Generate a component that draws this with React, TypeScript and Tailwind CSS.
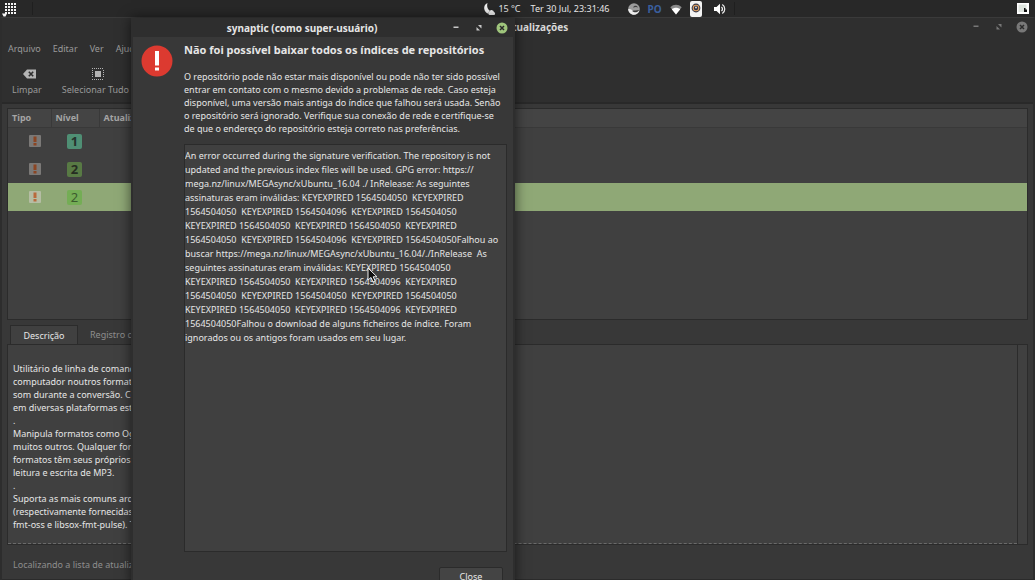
import { ReactNode } from 'react';

interface Update {
    level: number;
    selected?: boolean;
}

const updates: Update[] = [{ level: 1 }, { level: 2 }, { level: 2, selected: true }];

const menuItems = ['Arquivo', 'Editar', 'Ver', 'Ajuda'];

const description = [
    'Utilitário de linha de comando',
    'computador noutros formatos',
    'som durante a conversão. Com',
    'em diversas plataformas esta',
    '.',
    'Manipula formatos como Ogg',
    'muitos outros. Qualquer form',
    'formatos têm seus próprios',
    'leitura e escrita de MP3.',
    '.',
    'Suporta as mais comuns arqu',
    '(respectivamente fornecidas',
    'fmt-oss e libsox-fmt-pulse). T',
];

const message = [
    'O repositório pode não estar mais disponível ou pode não ter sido possível',
    'entrar em contato com o mesmo devido a problemas de rede. Caso esteja',
    'disponível, uma versão mais antiga do índice que falhou será usada. Senão',
    'o repositório será ignorado. Verifique sua conexão de rede e certifique-se',
    'de que o endereço do repositório esteja correto nas preferências.',
];

const errorLog = [
    'An error occurred during the signature verification. The repository is not',
    'updated and the previous index files will be used. GPG error: https://',
    'mega.nz/linux/MEGAsync/xUbuntu_16.04 ./ InRelease: As seguintes',
    'assinaturas eram inválidas: KEYEXPIRED 1564504050  KEYEXPIRED',
    '1564504050  KEYEXPIRED 1564504096  KEYEXPIRED 1564504050',
    'KEYEXPIRED 1564504050  KEYEXPIRED 1564504050  KEYEXPIRED',
    '1564504050  KEYEXPIRED 1564504096  KEYEXPIRED 1564504050Falhou ao',
    'buscar https://mega.nz/linux/MEGAsync/xUbuntu_16.04/./InRelease  As',
    'seguintes assinaturas eram inválidas: KEYEXPIRED 1564504050',
    'KEYEXPIRED 1564504050  KEYEXPIRED 1564504096  KEYEXPIRED',
    '1564504050  KEYEXPIRED 1564504050  KEYEXPIRED 1564504050',
    'KEYEXPIRED 1564504050  KEYEXPIRED 1564504096  KEYEXPIRED',
    '1564504050Falhou o download de alguns ficheiros de índice. Foram',
    'ignorados ou os antigos foram usados em seu lugar.',
].join('\n');

function WindowButtons({ active }: { active?: boolean }) {
    return (
        <div className={`flex items-center gap-[11px] ${active ? 'text-[#c8c8c8]' : 'text-[#787878]'}`}>
            <button aria-label="Minimizar">
                <svg className="size-3" viewBox="0 0 12 12">
                    <path d="M3.500 4.500h5V6h-5z" fill="currentColor" />
                </svg>
            </button>
            <button aria-label="Maximizar">
                <svg className="size-3" viewBox="0 0 12 12" fill="currentColor">
                    <path d="M5 3h3.500v3.500L7.400 5.400 6.200 4.200z" />
                    <path d="M7 8.500H3.500V5l1.200 1.200 1.100 1.100z" />
                </svg>
            </button>
            <button aria-label="Fechar">
                <svg className="size-3" viewBox="0 0 12 12">
                    <circle cx="6" cy="6" r="5.500" fill={active ? '#9fc57c' : '#787878'} />
                    <path d="M4 4l4 4M8 4l-4 4" stroke="#2b2b2b" strokeWidth="1.500" />
                </svg>
            </button>
        </div>
    );
}

function ToolButton({ icon, label }: { icon: ReactNode; label: string }) {
    return (
        <button className="flex flex-col items-center gap-[3px]">
            {icon}
            <span className="leading-[13px]">{label}</span>
        </button>
    );
}

function Panel() {
    return (
        <header className="flex h-[17px] shrink-0 items-center bg-[#282828] text-[#e6e6e6]">
            <div className="flex w-[46.8%] shrink-0 items-center">
                <svg className="ml-px h-4 w-[15px]" viewBox="0 0 15 16" fill="#f4f4f4">
                    {[2, 5, 8, 11].map((y) =>
                        [4, 7, 10, 13].map((x) => (
                            <rect key={`${x}-${y}`} x={x} y={y} width="2" height="2" />
                        ))
                    )}
                    <path d="M1 12.500h5L4.500 15.500h-2z" />
                </svg>
                <div className="ml-4 h-[13px] w-px bg-[#1f1f1f]" />
            </div>
            <svg className="size-3" viewBox="0 0 12 12" fill="#f0f0f0">
                <path d="M3.500 0C1 1.200 0 3.300.2 5.500.4 8 2 9.900 4.300 10.800c0-1.500.7-2.500 2-2.900C4 6.800 2.400 4 3.500 0z" />
                <path d="M5.500 12a2 2 0 0 1 .2-3.800 2.300 2.300 0 0 1 4.200.8 1.600 1.600 0 0 1 .3 3z" />
            </svg>
            <span className="ml-[2px]">15 °C</span>
            <span className="ml-[10px]">Ter 30 Jul, 23:31:46</span>
            <div className="ml-[18px] flex items-center gap-2">
                <svg className="size-3" viewBox="0 0 12 12">
                    <circle cx="6" cy="6" r="5.800" fill="#9c9c9c" />
                    <path d="M.2 6C2 5.600 3.800 6.400 5 8c1.800 1 4 .8 6.400-.2-.7 2.300-3 4-5.400 4C2.800 11.800.2 9.200.2 6z" fill="#ededed" />
                    <path d="M4.200 8c1.800-.8 4.500-.3 6.800-1-.8 1.800-2.800 2.500-4.500 2.200C5.500 9 4.800 8.500 4.200 8z" fill="#3c3c3c" />
                    <path d="M5 4.500c1-2.500 4-2.500 5 0-1.200-.8-3-.6-5 0z" fill="#3e3e3e" />
                </svg>
                <span className="text-[10px] font-bold text-[#3a5f9e]">PO</span>
                <svg className="size-3" viewBox="0 0 12 12">
                    <path d="M6 11.500L.3 4.300C3.500 1 8.500 1 11.700 4.300z" fill="#8a8a8a" />
                    <path d="M6 11.500L1.800 6.200c2.300-2 6.100-2 8.400 0z" fill="#fff" />
                </svg>
                <svg className="h-4 w-3" viewBox="0 0 12 16">
                    <rect x="0" y="0" width="12" height="16" rx="2" fill="#f3f3f3" />
                    <circle cx="6" cy="7" r="4.400" fill="#3a3a48" />
                    <circle cx="6" cy="7" r="3.300" fill="#e0a060" />
                    <circle cx="6" cy="7" r="2.200" fill="#2b3045" />
                    <circle cx="6" cy="6.500" r=".9" fill="#e8e8e8" />
                </svg>
                <svg className="ml-1 size-3" viewBox="0 0 12 12">
                    <path d="M0 4h2.500L6 .8v10.400L2.500 8H0z" fill="#fff" />
                    <path d="M7.500 3.800c1.200 1.300 1.200 3.100 0 4.400M8.300 1.500c3.300 2 3.300 7 0 9" fill="none" stroke="#eee" strokeWidth="1.200" />
                </svg>
                <div className="h-[13px] w-px bg-[#1f1f1f]" />
            </div>
            <svg className="mr-[6px] ml-auto h-[11px] w-3" viewBox="0 0 12 11">
                <rect width="12" height="11" fill="#fff" />
                <rect x="1.500" y="1.500" width="8" height="7.500" fill="#dfe5df" />
                <path d="M7 5h1.500v1.500H10V9H7z" fill="#111" />
            </svg>
        </header>
    );
}

function UpdateManager() {
    return (
        <main className="flex min-h-0 flex-1 flex-col border-x-2 border-t border-x-[#2d2d2d] border-t-[#3a3a3a] bg-[#383838]">
            <div className="border-b-2 border-[#292929] bg-[#2f2f2f] text-[#9a9a9a]">
                <div className="relative flex h-[18px] items-center justify-end pr-[5px]">
                    <h1 className="absolute inset-x-0 pr-10 text-center text-[10px] font-bold text-[#d8d8d8]">
                        Gerenciador de Atualizações
                    </h1>
                    <WindowButtons />
                </div>
                <nav className="mt-1 flex gap-3 px-[6px] py-px">
                    {menuItems.map((item) => (
                        <button key={item} className="leading-[16px]">
                            {item}
                        </button>
                    ))}
                </nav>
                <div className="mt-[10px] flex gap-5 px-[10px] pb-[6px]">
                    <ToolButton
                        label="Limpar"
                        icon={
                            <svg className="ml-[6px] h-3 w-[13px]" viewBox="0 0 13 12">
                                <path d="M0 6l4-4.500h9v9H4z" fill="#b4b4b4" />
                                <path d="M5.800 3.800l4.400 4.400M10.200 3.800L5.800 8.200" stroke="#2f2f2f" strokeWidth="1.600" />
                            </svg>
                        }
                    />
                    <ToolButton
                        label="Selecionar Tudo"
                        icon={
                            <svg className="ml-[6px] size-3" viewBox="0 0 12 12" stroke="#b4b4b4">
                                <path d="M0 .5h12M0 11.500h12M.5 2v8M11.500 2v8" strokeDasharray="1 1" />
                                <rect x="3" y="3" width="6" height="6" fill="#b4b4b4" stroke="none" />
                            </svg>
                        }
                    />
                </div>
            </div>

            {/* Update list */}
            <div className="mx-[5px] mt-1 min-h-0 flex-1 border border-[#2b2b2b] bg-[#404040]">
                <table className="w-full table-fixed border-collapse">
                    <thead className="bg-[#444] text-left text-[#a5a5a5]">
                        <tr className="h-[18px] border-b border-[#393939]">
                            <th className="w-[43px] border-r border-[#393939] p-0 pl-1 leading-[14px]">Tipo</th>
                            <th className="w-12 border-r border-[#393939] p-0 pl-1 leading-[14px]">Nível</th>
                            <th className="p-0 pl-1 leading-[14px]">Atualizar</th>
                        </tr>
                    </thead>
                    <tbody>
                        {updates.map((update, i) => (
                            <tr key={i} className={`h-7 ${update.selected ? 'bg-[#8fa876]' : ''}`}>
                                <td className="pl-[21px]">
                                    <svg className="size-3" viewBox="0 0 12 12">
                                        <rect width="12" height="12" rx="1" fill={update.selected ? '#b5bda4' : '#7b7977'} />
                                        <path
                                            d="M4.500 1.500h3v5.500h-3zM4.500 8h3v2.500h-3z"
                                            fill={update.selected ? '#b96a3c' : '#8c4522'}
                                        />
                                    </svg>
                                </td>
                                <td className="pl-4">
                                    <span
                                        className={`flex size-[15px] items-center justify-center rounded-xs text-[13px] leading-[15px] ${
                                            update.level === 1
                                                ? 'bg-[#4f8f74] font-bold text-[#26332d]'
                                                : update.selected
                                                ? 'bg-[#74ad55] text-[#3c5b2e]'
                                                : 'bg-[#587a44] font-bold text-[#262d22]'
                                        }`}
                                    >
                                        {update.level}
                                    </span>
                                </td>
                                <td />
                            </tr>
                        ))}
                    </tbody>
                </table>
            </div>

            {/* Details */}
            <div className="mx-[5px] mt-[5px] flex" role="tablist">
                <button
                    role="tab"
                    aria-selected="true"
                    className="-mb-px ml-[3px] h-5 w-[68px] border border-b-0 border-[#2b2b2b] bg-[#404040] text-[#e6e6e6]"
                >
                    Descrição
                </button>
                <button role="tab" aria-selected="false" className="ml-3 text-[#8e8e8e]">
                    Registro de alterações
                </button>
            </div>
            <section className="mx-[5px] flex border border-[#2b2b2b] bg-[#404040]">
                <div className="flex-1 border-b border-dashed border-[#6a6a6a] px-[5px] pt-[17px] pb-3 leading-[13px] text-[#e6e6e6]">
                    {description.map((line, i) => (
                        <p key={i}>{line}</p>
                    ))}
                </div>
                <div className="w-[10px] border-l border-[#2b2b2b]" />
            </section>
            <footer className="border-b border-[#2b2b2b] px-[11px] pt-[13px] pb-[7px] leading-[14px] text-[#8e8e8e]">
                Localizando a lista de atualizações
            </footer>
        </main>
    );
}

function ErrorDialog() {
    return (
        <div
            role="dialog"
            aria-labelledby="dialog-title"
            className="absolute top-[18px] left-[131px] w-96 border-x-2 border-[#2e2e2e] bg-[#383838] text-[#e6e6e6] shadow-[0_0_12px_rgba(0,0,0,0.6)]"
        >
            <div className="relative flex h-[19px] items-center justify-end bg-[#2e2e2e] pr-[5px]">
                <h2 id="dialog-title" className="absolute inset-x-0 pr-[42px] text-center text-[10px] font-bold">
                    synaptic (como super-usuário)
                </h2>
                <WindowButtons active />
            </div>
            <div className="flex pr-[6px] pl-2">
                <svg className="mt-2 size-8 shrink-0" viewBox="0 0 32 32">
                    <circle cx="16" cy="16" r="15.500" fill="#dc3a30" />
                    <path d="M14 6h4v14.500h-4zM14 22.500h4v3h-4z" fill="#fff" />
                </svg>
                <div className="ml-[11px] min-w-0 flex-1">
                    <h3 className="mt-[6px] text-[11px] leading-[14px] font-bold whitespace-nowrap">
                        Não foi possível baixar todos os índices de repositórios
                    </h3>
                    <p className="mt-[13px] leading-[13px] whitespace-pre">{message.join('\n')}</p>
                    <textarea
                        readOnly
                        aria-label="Detalhes do erro"
                        value={errorLog}
                        className="mt-[9px] block h-[408px] w-full resize-none overflow-hidden border border-[#2b2b2b] bg-[#404040] pt-1 leading-[14px] whitespace-pre outline-none"
                    />
                    <div className="mt-[15px] flex justify-end pr-1">
                        <button className="h-5 w-16 rounded-xs border border-[#2b2b2b] bg-[#444]">Close</button>
                    </div>
                </div>
            </div>
        </div>
    );
}

export default function App() {
    return (
        <div className="relative flex h-screen flex-col overflow-hidden bg-[#282828] font-['Noto_Sans',sans-serif] text-[9px] leading-[14px]">
            <Panel />
            <UpdateManager />
            <ErrorDialog />
            <svg className="absolute top-[267px] left-[367px] h-4 w-3" viewBox="0 0 12 16">
                <path d="M1 1v12l3-2.500L6 15l2.200-1-2-4.200H10z" fill="#111" stroke="#f0f0f0" />
            </svg>
        </div>
    );
}
